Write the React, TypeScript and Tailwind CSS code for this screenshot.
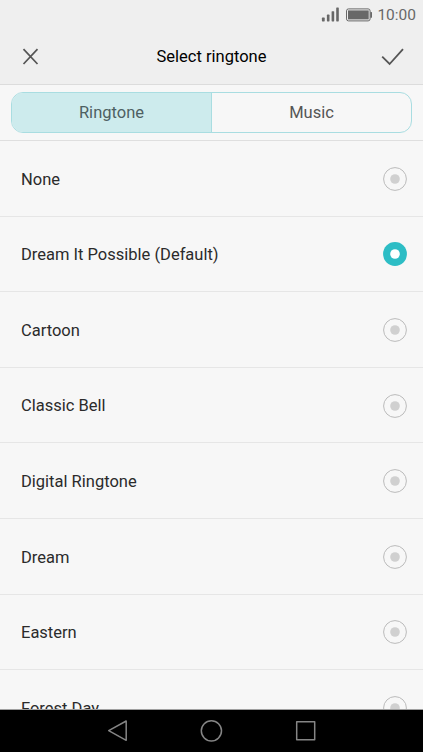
const ringtones = [
  "None",
  "Dream It Possible (Default)",
  "Cartoon",
  "Classic Bell",
  "Digital Ringtone",
  "Dream",
  "Eastern",
  "Forest Day",
];

const selected = "Dream It Possible (Default)";

function StatusBar() {
  return (
    <div className="flex h-[29px] items-center justify-end pr-[7px] text-[#686868]">
      <svg width="18" height="15" viewBox="0 0 18 15" className="mr-[6px]" fill="currentColor">
        <rect x="0.9" y="10.6" width="2.8" height="3.8" rx="0.6" />
        <rect x="5.9" y="7.6" width="2.6" height="6.8" rx="0.6" />
        <rect x="10.6" y="4.2" width="2.6" height="10.2" rx="0.6" />
        <rect x="15.2" y="0.5" width="2.6" height="13.9" rx="0.6" />
      </svg>
      <svg width="27" height="14" viewBox="0 0 27 14" className="mr-[5px]" fill="currentColor">
        <rect x="1.5" y="0.9" width="23.6" height="12" rx="2" fill="none" stroke="currentColor" strokeWidth="1" />
        <rect x="3" y="2.4" width="20.7" height="9" />
        <rect x="25.3" y="4.1" width="1.7" height="5.6" rx="0.5" />
      </svg>
      <span className="pt-[2px] text-[15.5px] leading-none">10:00</span>
    </div>
  );
}

function Header() {
  return (
    <div className="flex h-[55px] items-center justify-between pr-[18px] pl-[22px]">
      <svg width="18" height="18" viewBox="0 0 18 18" fill="none" stroke="#555" strokeWidth="1.7">
        <path d="M1.5 1.2 15.5 16M15.5 1.2 1.5 16" />
      </svg>
      <h1 className="pt-px pl-[2px] text-[16.5px] leading-none text-black">Select ringtone</h1>
      <svg width="24" height="18" viewBox="0 0 24 18" fill="none" stroke="#555" strokeWidth="1.8">
        <path d="M1.2 8.6 8.6 16 22 1.2" />
      </svg>
    </div>
  );
}

function Radio({ checked }: { checked: boolean }) {
  if (checked) {
    return (
      <svg width="24" height="24" viewBox="0 0 24 24">
        <circle cx="12" cy="12" r="11.9" fill="#2dbdc5" />
        <circle cx="12" cy="12" r="4.8" fill="#fff" />
      </svg>
    );
  }
  return (
    <svg width="24" height="24" viewBox="0 0 24 24">
      <circle cx="12" cy="12" r="11.4" fill="none" stroke="#bbb" strokeWidth="1" />
      <circle cx="12" cy="12" r="4.8" fill="#d0d0d0" />
    </svg>
  );
}

export default function App() {
  return (
    <div className="flex h-[752px] w-[423px] flex-col overflow-hidden bg-[#f7f7f7] font-[Roboto,sans-serif]">
      <div className="h-[85px] shrink-0 border-b border-[#dcdcdc] bg-[#efefef]">
        <StatusBar />
        <Header />
      </div>

      <div className="h-14 shrink-0 border-b border-[#dfdfdf] px-[11px] pt-[7px]">
        <div className="flex h-[41px] overflow-hidden rounded-[12px] border border-[#a9dde1] text-[16.5px]">
          <div className="flex w-[200px] items-center justify-center border-r border-[#a9dde1] bg-[#cdebed] pt-[2px] text-[#4d6062]">
            Ringtone
          </div>
          <div className="flex flex-1 items-center justify-center pt-[2px] text-[#555]">Music</div>
        </div>
      </div>

      <div className="min-h-0 flex-1 overflow-hidden border-b border-[#a0a0a0]">
        {ringtones.map((name) => (
          <div
            key={name}
            className="flex h-[75.6px] items-center justify-between border-b border-[#e6e6e6] pt-px pr-4 pl-[21px]"
          >
            <span className="pt-[2.4px] text-[16.5px] text-[#2b2b2b]">{name}</span>
            <Radio checked={name === selected} />
          </div>
        ))}
      </div>

      <div className="flex h-[42px] shrink-0 items-center justify-center bg-black">
        <svg width="211" height="24" viewBox="0 0 211 24" fill="none" stroke="#858585" strokeWidth="1.5" strokeLinejoin="round">
          <path d="M20.2 2v19.3L2.7 11.7z" />
          <circle cx="105.4" cy="11.8" r="10.1" />
          <rect x="190.7" y="2.7" width="18" height="18" />
        </svg>
      </div>
    </div>
  );
}
